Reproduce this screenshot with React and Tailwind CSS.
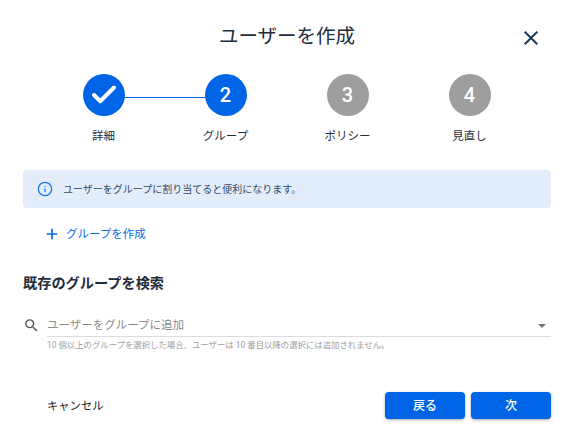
import { Check, Plus, Info } from 'lucide-react';

const FONT = "font-['Roboto','Noto_Sans_CJK_JP',sans-serif]";

const steps = [
  { label: '詳細', done: true, active: true },
  { label: 'グループ', num: 2, active: true },
  { label: 'ポリシー', num: 3 },
  { label: '見直し', num: 4 },
];

function Step({ step, first }) {
  return (
    <div className="relative flex w-[122px] flex-col items-center">
      {first && <div className="absolute left-[61px] top-[23px] h-px w-[122px] bg-[#0a64dc]" />}
      <div className={`relative flex h-[42px] w-[42px] items-center justify-center rounded-full text-[20px] font-medium text-white ${step.active ? 'bg-[#0064e6]' : 'bg-[#9e9e9e]'}`}>
        {step.done ? <Check size={30} strokeWidth={3.2} /> : step.num}
      </div>
      <div className="mt-[11px] text-[11.5px] leading-[18px] text-[#1f2d3d]">{step.label}</div>
    </div>
  );
}

export default function App() {
  return (
    <div className={`${FONT} h-[441px] w-[574px] overflow-hidden bg-white px-[23px]`}>
      <div className="relative flex h-[74px] items-start justify-center pt-[22px]">
        <h1 className="text-[19.5px] leading-[29px] font-normal text-[#1f2d3d]">ユーザーを作成</h1>
        <svg className="absolute right-[8.5px] top-[25.5px] h-[24px] w-[24px] fill-[#1b3a57]" viewBox="0 0 24 24">
          <path d="M19 6.41 17.59 5 12 10.59 6.41 5 5 6.41 10.59 12 5 17.59 6.41 19 12 13.41 17.59 19 19 17.59 13.41 12z" />
        </svg>
      </div>

      <div className="-ml-[1px] flex justify-center">
        {steps.map((s, i) => <Step key={s.label} step={s} first={i === 0} />)}
      </div>

      <div className="mt-[25px] flex h-[38px] items-center rounded-[4px] bg-[#e3edf9] pl-[14px]">
        <Info size={16} className="text-[#1a73e8]" strokeWidth={1.9} />
        <span className="ml-[10px] text-[10px] text-[#2f4a68]">ユーザーをグループに割り当てると便利になります。</span>
      </div>

      <div className="mt-[16px] flex h-[20px] items-center pl-[21px] text-[#0a6be8]">
        <Plus size={16} strokeWidth={2.6} />
        <span className="ml-[6px] mt-[1px] text-[11.5px]">グループを作成</span>
      </div>

      <h2 className="mt-[29px] text-[14.2px] leading-[21px] font-bold text-[#1f2d3d]">既存のグループを検索</h2>

      <div className="mt-[21px] flex items-start">
        <svg className="mt-[2px] h-[17px] w-[17px] shrink-0 fill-[#555555]" viewBox="0 0 24 24">
          <path d="M15.5 14h-.79l-.28-.27A6.47 6.47 0 0 0 16 9.5 6.5 6.5 0 1 0 9.5 16c1.61 0 3.09-.59 4.23-1.57l.27.28v.79l5 4.99L20.49 19l-4.99-5zm-6 0C7.01 14 5 11.99 5 9.5S7.01 5 9.5 5 14 7.01 14 9.5 11.99 14 9.5 14z" />
        </svg>
        <div className="ml-[7px] flex-1">
          <div className="flex h-[22px] items-center justify-between border-b border-[#dcdcdc]">
            <span className="text-[11.5px] text-[#8a8a8a]">ユーザーをグループに追加</span>
            <span className="mr-[5px] h-0 w-0 border-x-[4px] border-t-[4px] border-x-transparent border-t-[#757575]" />
          </div>
          <p className="mt-[2px] text-[8.4px] leading-[12px] text-[#9e9e9e]">10 個以上のグループを選択した場合、ユーザーは 10 番目以降の選択には追加されません。</p>
        </div>
      </div>

      <div className="mt-[41px] flex items-center">
        <button className="ml-[24px] mt-[3px] text-[11.3px] text-[#212121]">キャンセル</button>
        <div className="ml-auto flex gap-[6px]">
          <button className="h-[27px] w-[80px] rounded-[4px] bg-[#0064e6] text-[12px] font-medium text-white shadow-[0_1px_3px_rgba(0,0,0,0.35)]">戻る</button>
          <button className="h-[27px] w-[80px] rounded-[4px] bg-[#0064e6] text-[12px] font-medium text-white shadow-[0_1px_3px_rgba(0,0,0,0.35)]">次</button>
        </div>
      </div>
    </div>
  );
}
